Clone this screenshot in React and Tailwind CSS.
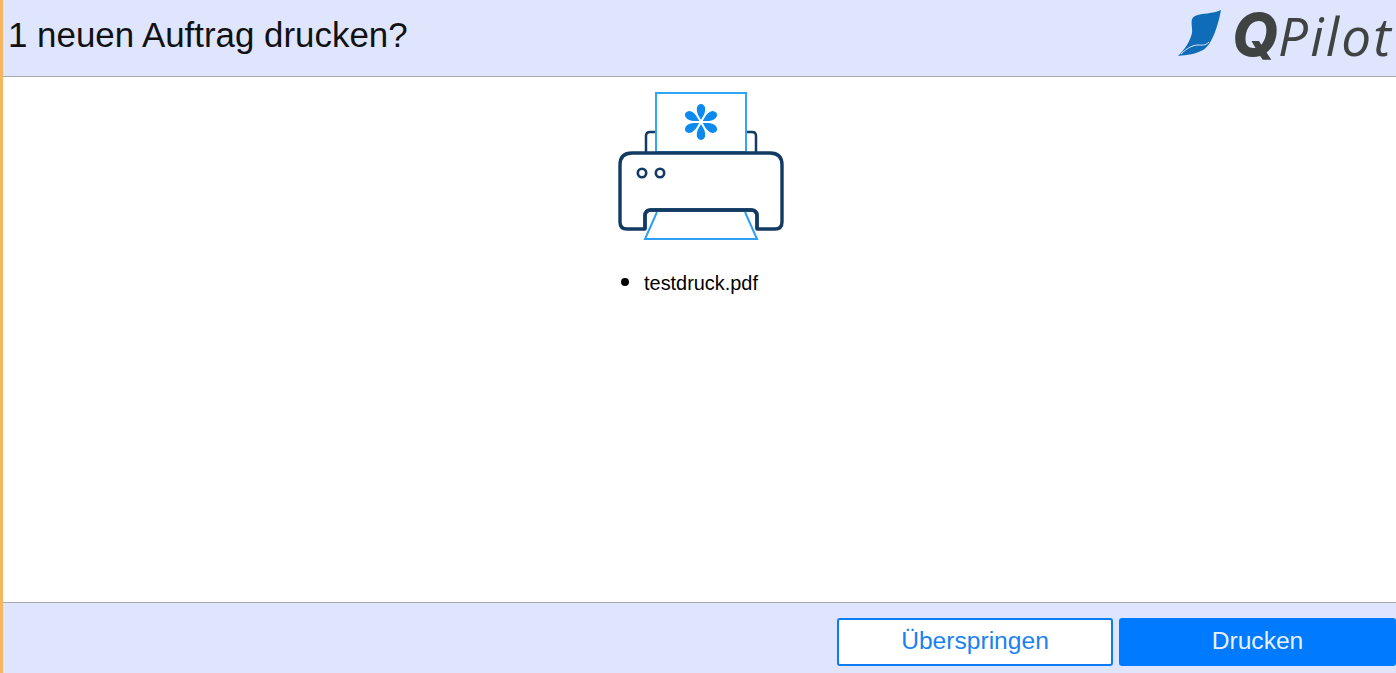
const petal = "M0 -2 C-1.5 -5 -4.2 -8 -4.2 -13 A4.2 5 0 0 1 4.2 -13 C4.2 -8 1.5 -5 0 -2 Z";

export default function App() {
  return (
    <div className="flex h-[673px] w-full flex-col overflow-hidden border-l-[3px] border-[#f8b55f] bg-white font-['Liberation_Sans',Arial,sans-serif] text-black">
      <header className="flex h-[77px] shrink-0 items-center justify-between border-b border-[#a9a9b0] bg-[#dee5fd] pl-[5px] pr-[3px]">
        <h1 className="mb-[6px] text-[34.9px] font-normal leading-none text-[#111]">1 neuen Auftrag drucken?</h1>
        <div className="flex items-center gap-[10px]">
          <svg className="mb-[10px]" width="44" height="48" viewBox="0 0 44 48" aria-hidden="true">
            <path d="M43 1 C35 5 24 4 17 7 C11 10 15 18 14 24 C12 33 6 41 0 47 C9 46 18 45 25 41 C34 36 40 17 43 1 Z" fill="#0f6cb8" />
            <path d="M3 45 C9 39 15 36 20 36 C24 36 27 37 31 33" fill="none" stroke="#dee5fd" strokeWidth="1" />
          </svg>
          <div className="mb-[8px] flex items-baseline italic leading-none text-[#3f4443]">
            <span className="font-['Inter',sans-serif] text-[59px] font-extrabold">Q</span>
            <span className="font-['Open_Sans',sans-serif] text-[53px] font-normal tracking-[2.2px]">Pilot</span>
          </div>
        </div>
      </header>
      <main className="flex min-h-0 flex-1 flex-col items-center">
        <svg className="ml-[-1px] mt-[11px]" width="180" height="156" viewBox="0 0 180 156" aria-hidden="true">
          <path d="M37 64 V48 Q37 44 41 44 H47 M137 44 H143 Q147 44 147 48 V64" fill="none" stroke="#123a63" strokeWidth="2.5" />
          <rect x="47" y="5" width="90" height="59" fill="#ffffff" stroke="#33a5f5" strokeWidth="2" />
          <g fill="#0d8af0" transform="translate(92 34)">
            <path d={petal} />
            <path d={petal} transform="rotate(60)" />
            <path d={petal} transform="rotate(120)" />
            <path d={petal} transform="rotate(180)" />
            <path d={petal} transform="rotate(240)" />
            <path d={petal} transform="rotate(300)" />
          </g>
          <path d="M36 141 H18 Q11 141 11 134 V77 Q11 65 23 65 H161 Q173 65 173 77 V134 Q173 141 166 141 H148 V128 Q148 122 142 122 H42 Q36 122 36 128 Z" fill="#ffffff" stroke="#123a63" strokeWidth="3.4" strokeLinejoin="round" />
          <path d="M48 124 L36 151 H148 L136 124" fill="#ffffff" stroke="#2f9ff5" strokeWidth="2" />
          <path d="M36 141 V128 Q36 122 42 122 H142 Q148 122 148 128 V141" fill="none" stroke="#123a63" strokeWidth="3.4" />
          <circle cx="33" cy="85" r="4.2" fill="none" stroke="#123a63" strokeWidth="2.6" />
          <circle cx="51" cy="85" r="4.2" fill="none" stroke="#123a63" strokeWidth="2.6" />
        </svg>
        <ul className="ml-[3px] mt-[25px] list-disc text-[19.9px] leading-[24px] marker:text-[26px]">
          <li>testdruck.pdf</li>
        </ul>
      </main>
      <footer className="flex h-[71px] shrink-0 items-center justify-end gap-[6px] border-t border-[#a9a9b0] bg-[#dee5fd] pt-[7px]">
        <button className="h-[48px] w-[276px] rounded-[3px] border-2 border-[#0a7cf5] bg-white text-[24.6px] text-[#1a82f0]">Überspringen</button>
        <button className="h-[48px] w-[277px] rounded-[3px] bg-[#007aff] text-[24.6px] text-[#e8f2ff]">Drucken</button>
      </footer>
    </div>
  );
}
